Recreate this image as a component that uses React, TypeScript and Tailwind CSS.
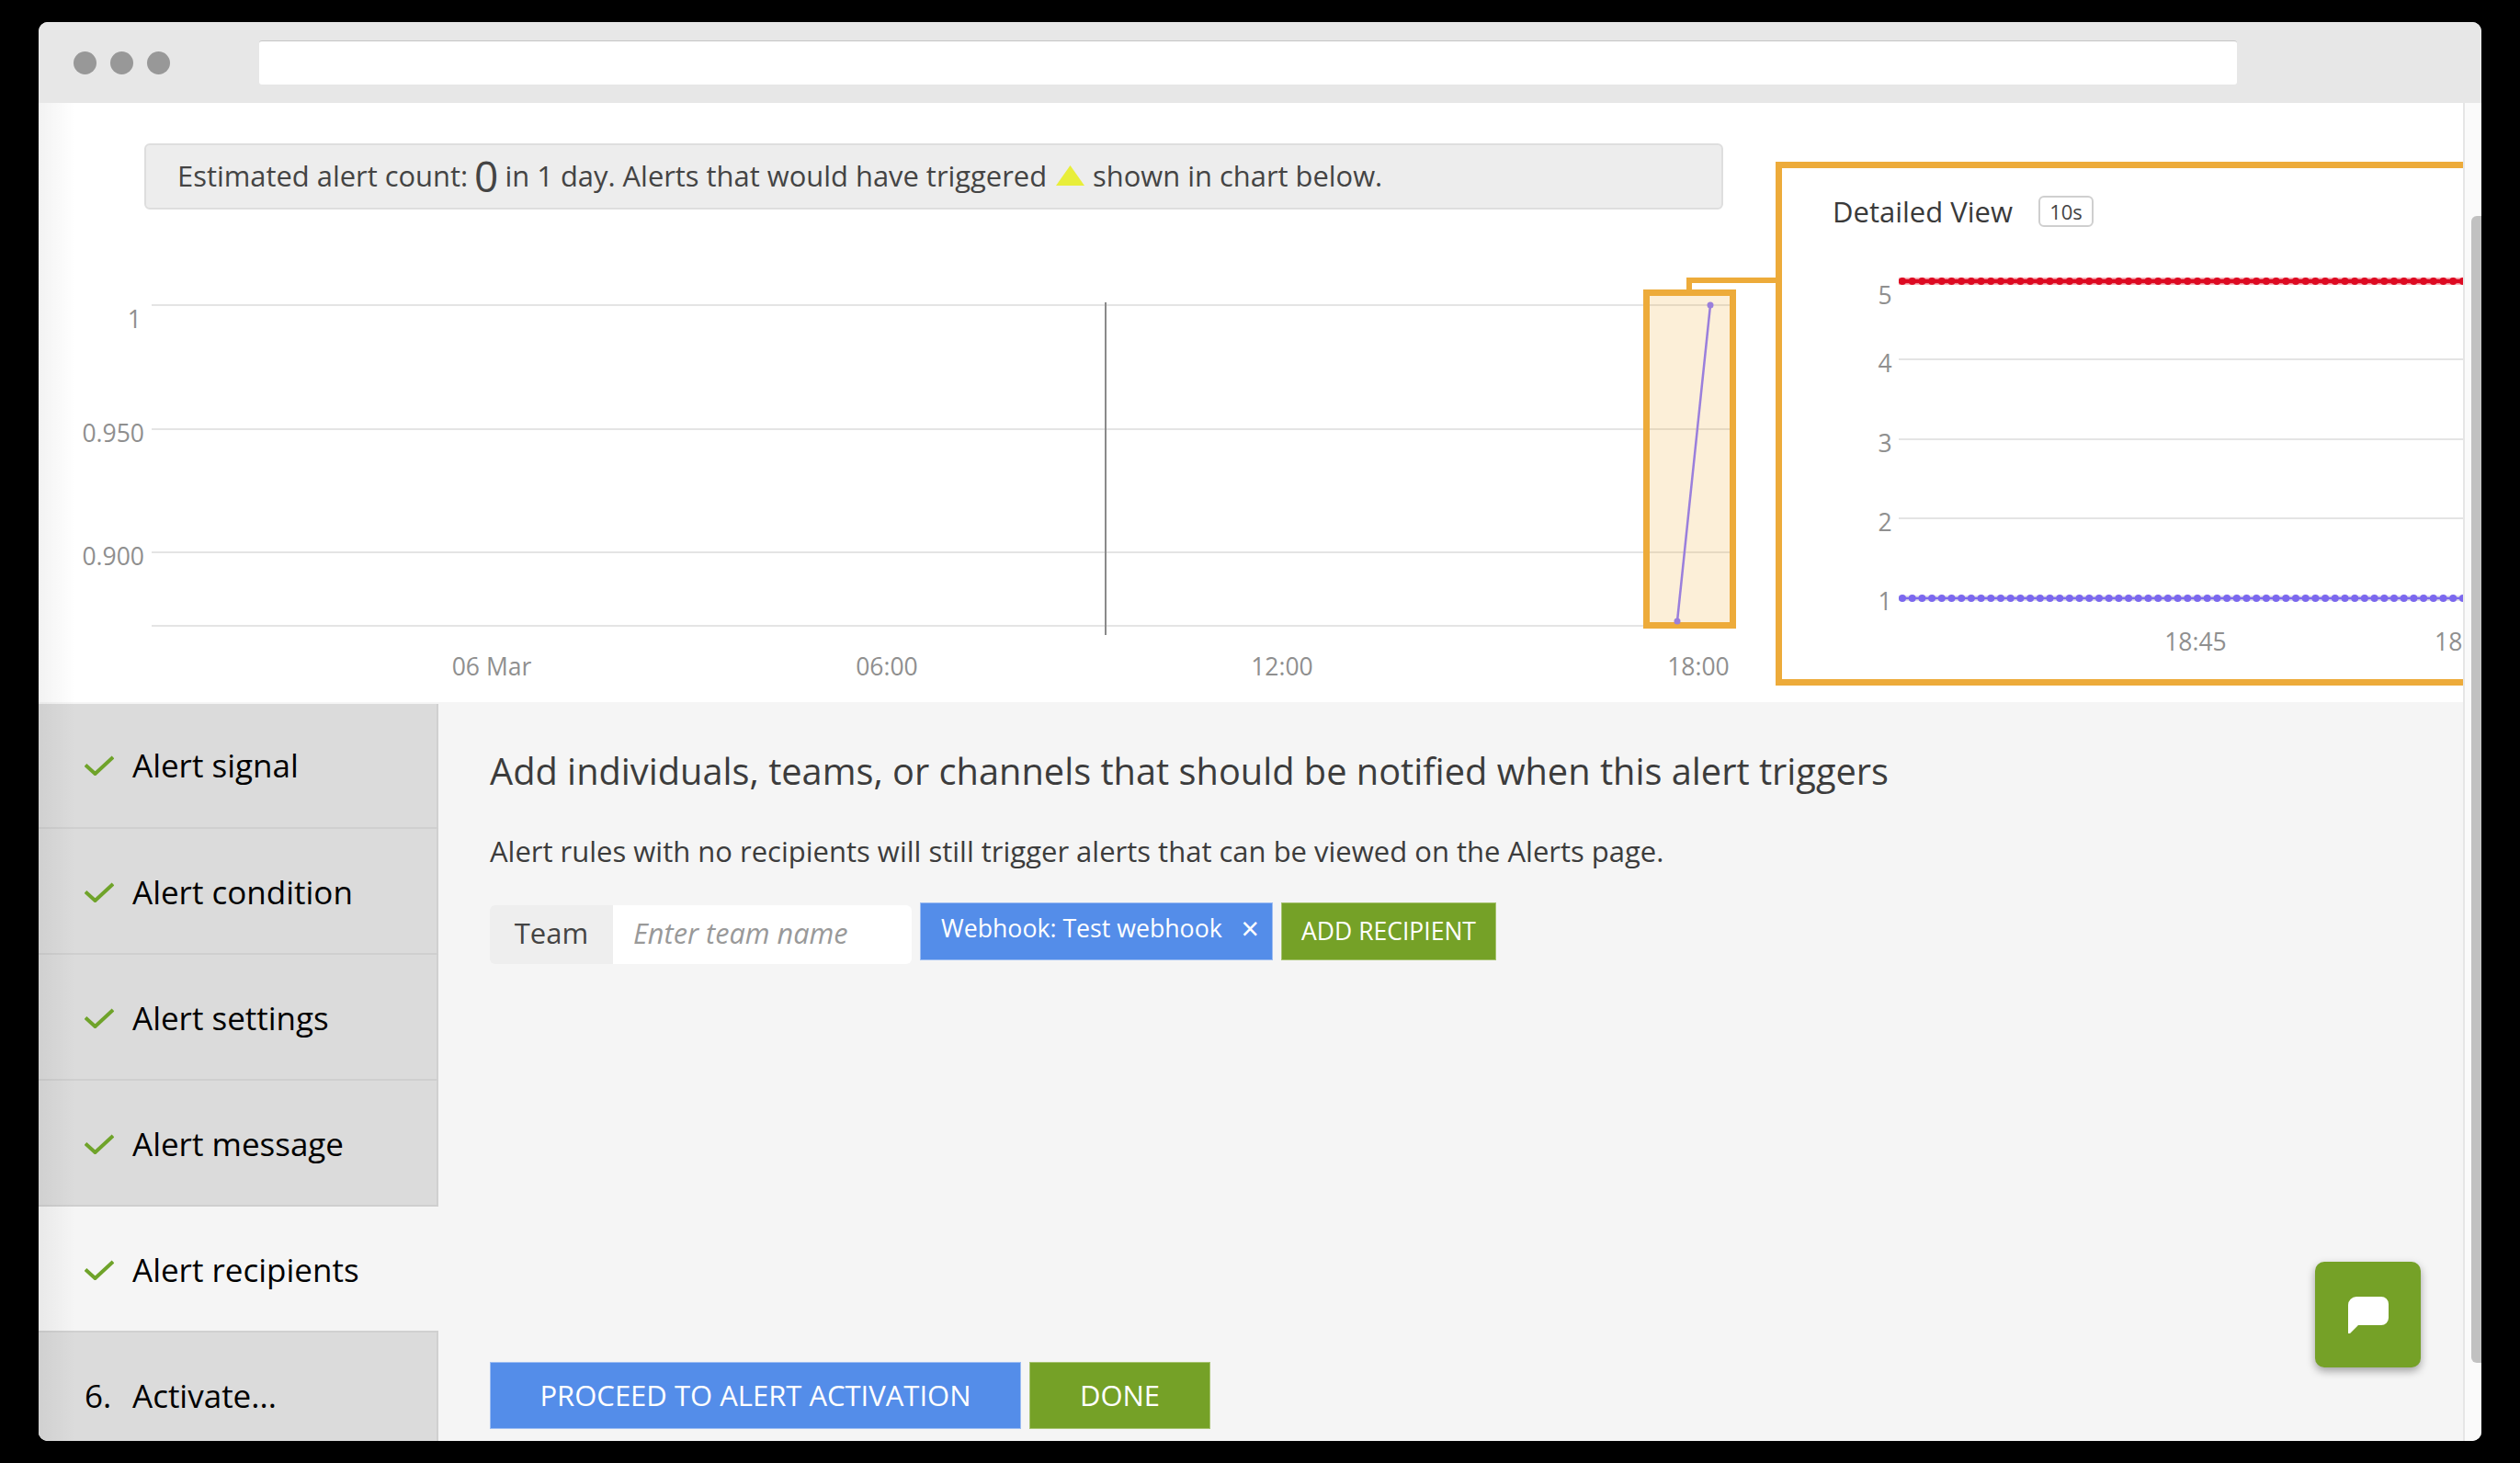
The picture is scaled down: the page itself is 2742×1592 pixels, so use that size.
import { useState } from "react";

const steps = [
  { label: "Alert signal", done: true },
  { label: "Alert condition", done: true },
  { label: "Alert settings", done: true },
  { label: "Alert message", done: true },
  { label: "Alert recipients", done: true, active: true },
  { label: "Activate...", done: false },
];

function CheckMark() {
  return (
    <svg width="32" height="22" viewBox="0 0 32 22" fill="none" className="shrink-0">
      <path d="M1 10.5 L11.5 20 L31 2" stroke="#6fa32a" strokeWidth="4" />
    </svg>
  );
}

function TrendChart() {
  const gridY = [332, 467, 601, 681];
  return (
    <svg width="1900" height="524" viewBox="42 240 1900 524" className="block mt-[12px]">
      {gridY.map((y) => (
        <line key={y} x1="165" x2="1884" y1={y} y2={y} stroke="#e4e4e4" strokeWidth="2" />
      ))}
      <g fontFamily="'Open Sans', sans-serif" fontSize="26.5" fill="#8f8f8f" textAnchor="end">
        <text x="154" y="357">1</text>
        <text x="157" y="481">0.950</text>
        <text x="157" y="615">0.900</text>
      </g>
      <g fontFamily="'Open Sans', sans-serif" fontSize="26.5" fill="#8f8f8f" textAnchor="middle">
        <text x="535" y="735">06 Mar</text>
        <text x="965" y="735">06:00</text>
        <text x="1395" y="735">12:00</text>
        <text x="1848" y="735">18:00</text>
      </g>
      <line x1="1203" x2="1203" y1="329" y2="691" stroke="#8a8a8a" strokeWidth="2" />
      {/* brushed range */}
      <rect x="1791.5" y="318.5" width="94" height="362" fill="#f0ad3a" fillOpacity="0.2" stroke="#edab3a" strokeWidth="7" />
      <path d="M1838 315 V305 H1932" fill="none" stroke="#edab3a" strokeWidth="6" />
      <line x1="1825" y1="676" x2="1861" y2="332" stroke="#9a7fdc" strokeWidth="2.5" />
      <circle cx="1861" cy="332" r="3.5" fill="#9a7fdc" />
      <circle cx="1825" cy="676" r="3.5" fill="#9a7fdc" />
    </svg>
  );
}

function DetailChart() {
  const gridY = [391, 478, 564];
  return (
    <svg width="741" height="556" viewBox="1939 183 741 556" className="block">
      {gridY.map((y) => (
        <line key={y} x1="2066" x2="2680" y1={y} y2={y} stroke="#e4e4e4" strokeWidth="2" />
      ))}
      <line x1="2066" x2="2680" y1="306" y2="306" stroke="#f6b9bf" strokeWidth="8" />
      <line x1="2066" x2="2680" y1="306" y2="306" stroke="#dd0a22" strokeWidth="4.5" />
      <line x1="2070" x2="2680" y1="306" y2="306" stroke="#dd0a22" strokeWidth="8" strokeLinecap="round" strokeDasharray="0 10.7" />
      <line x1="2066" x2="2680" y1="651" y2="651" stroke="#e2e2e6" strokeWidth="6" />
      <line x1="2066" x2="2680" y1="651" y2="651" stroke="#7b68ee" strokeWidth="2.5" />
      <line x1="2070" x2="2680" y1="651" y2="651" stroke="#7b68ee" strokeWidth="8" strokeLinecap="round" strokeDasharray="0 10.7" />
      <g fontFamily="'Open Sans', sans-serif" fontSize="26.5" fill="#8f8f8f" textAnchor="middle">
        <text x="2051" y="331">5</text>
        <text x="2051" y="405">4</text>
        <text x="2051" y="492">3</text>
        <text x="2051" y="578">2</text>
        <text x="2051" y="664">1</text>
        <text x="2389" y="708">18:45</text>
        <text x="2649" y="708" textAnchor="start">18</text>
      </g>
    </svg>
  );
}

export default function App() {
  const [team, setTeam] = useState("");

  return (
    <div className="w-[2742px] h-[1592px] bg-black pt-[24px] pl-[42px] overflow-hidden font-['Open_Sans',sans-serif]">
      <div className="relative w-[2658px] h-[1544px] rounded-[10px] overflow-hidden flex flex-col bg-white">
        <div className="h-[88px] shrink-0 bg-[#e7e7e7] flex items-center">
          <div className="flex gap-[15px] ml-[38px]">
            <span className="w-[25px] h-[25px] rounded-full bg-[#989898]" />
            <span className="w-[25px] h-[25px] rounded-full bg-[#989898]" />
            <span className="w-[25px] h-[25px] rounded-full bg-[#989898]" />
          </div>
          <div className="ml-[97px] w-[2152px] h-[48px] bg-white border-t border-[#c4c4c4] rounded-[3px]" />
        </div>

        <div className="flex-1 flex min-h-0">
          <div className="relative w-[2638px] flex flex-col">
            <section className="relative h-[652px] shrink-0 bg-white overflow-hidden">
              <div className="ml-[115px] mt-[44px] w-[1718px] h-[72px] flex items-center pl-[34px] pb-[2px] bg-[#ededed] border-2 border-[#dedede] rounded-[6px] text-[30.9px] text-[#444]">
                <span>Estimated alert count:</span>
                <span className="text-[46px] leading-none mx-[7px]">0</span>
                <span>in 1 day. Alerts that would have triggered</span>
                <svg width="31" height="22" viewBox="0 0 31 22" className="ml-[10px] mr-[9px]">
                  <path d="M15.5 0 L31 22 H0 Z" fill="#e8ee3a" />
                </svg>
                <span>shown in chart below.</span>
              </div>
              <TrendChart />

              <div className="absolute left-[1890px] top-[64px] w-[748px] h-[570px] bg-white border-y-[7px] border-l-[7px] border-[#edab3a]">
                <div className="absolute left-[55px] top-[24px] flex items-center gap-[28px]">
                  <span className="text-[31px] text-[#3a3a3a]">Detailed View</span>
                  <span className="w-[60px] h-[34px] flex items-center justify-center border-2 border-[#cfcfcf] rounded-[6px] text-[22px] text-[#444]">
                    10s
                  </span>
                </div>
                <DetailChart />
              </div>
            </section>

            <div className="flex-1 flex min-h-0 bg-[#f5f5f5]">
              <nav className="w-[435px] mt-[2px] shrink-0 overflow-hidden">
                {steps.map((step, i) => (
                  <div
                    key={step.label}
                    className={`flex items-center pl-[50px] gap-[20px] border-b-2 text-[35px] text-black ${
                      i === 0 ? "h-[136px]" : "h-[137px] pt-[3px]"
                    } ${
                      step.active
                        ? "bg-[#f5f5f5] border-[#d0d0d0]"
                        : "bg-[#dbdbdb] border-[#cfcfcf] border-r-2 border-r-[#d0d0d0]"
                    }`}
                  >
                    {step.done ? (
                      <CheckMark />
                    ) : (
                      <span className="w-[32px] shrink-0">{i + 1}.</span>
                    )}
                    <span>{step.label}</span>
                  </div>
                ))}
              </nav>

              <main className="flex-1 flex flex-col pl-[56px] pt-[47px] pb-[13px] text-[#3c3c3c]">
                <h2 className="text-[39.75px] leading-[56px]">
                  Add individuals, teams, or channels that should be notified when this alert triggers
                </h2>
                <p className="mt-[37px] text-[31px] leading-[44px]">
                  Alert rules with no recipients will still trigger alerts that can be viewed on the Alerts page.
                </p>
                <div className="mt-[34px] flex items-start">
                  <div className="mt-[3px] flex h-[64px] rounded-[6px] overflow-hidden">
                    <span className="w-[134px] pb-[3px] flex items-center justify-center bg-[#eeeeee] text-[31px] text-[#444]">
                      Team
                    </span>
                    <input
                      value={team}
                      onChange={(e) => setTeam(e.target.value)}
                      placeholder="Enter team name"
                      className="w-[325px] bg-white pl-[22px] pb-[3px] text-[30.7px] outline-none placeholder:italic placeholder:text-[#999]"
                    />
                  </div>
                  <div className="ml-[9px] w-[384px] h-[63px] flex items-center justify-between whitespace-nowrap pl-[22px] pr-[14px] pb-[7px] bg-[#548de9] border border-[#9dbdf2] text-[26.7px] text-white">
                    <span>Webhook: Test webhook</span>
                    <span className="text-[34px] leading-none">×</span>
                  </div>
                  <button className="ml-[9px] w-[234px] h-[63px] bg-[#75a127] border border-[#a6c26f] text-[26.5px] text-white">
                    ADD RECIPIENT
                  </button>
                </div>
                <div className="mt-auto flex gap-[9px]">
                  <button className="w-[578px] h-[73px] bg-[#548de9] border border-[#9dbdf2] text-[31px] text-white">
                    PROCEED TO ALERT ACTIVATION
                  </button>
                  <button className="w-[197px] h-[73px] bg-[#75a127] border border-[#a6c26f] text-[31px] text-white">
                    DONE
                  </button>
                </div>
              </main>
            </div>

            <button className="absolute right-[46px] bottom-[80px] w-[115px] h-[115px] rounded-[10px] bg-[#75a127] shadow-[0_4px_10px_rgba(0,0,0,0.35)] flex items-center justify-center">
              <svg width="44" height="40" viewBox="0 0 44 40">
                <path d="M9 0 H36 a8 8 0 0 1 8 8 V23 a8 8 0 0 1 -8 8 H11 L2 40 a1 1 0 0 1 -2 -1 V9 a9 9 0 0 1 9 -9 Z" fill="#fff" />
              </svg>
            </button>
          </div>

          <div className="w-[20px] shrink-0 bg-[#fafafa] border-l-2 border-[#e6e6e6]">
            <div className="mt-[123px] ml-[7px] w-[11px] h-[1248px] bg-[#c1c1c1] rounded-l-[6px]" />
          </div>
        </div>

        <div className="absolute left-0 top-[88px] bottom-0 w-[40px] bg-gradient-to-r from-black/5 to-transparent pointer-events-none" />
      </div>
    </div>
  );
}
